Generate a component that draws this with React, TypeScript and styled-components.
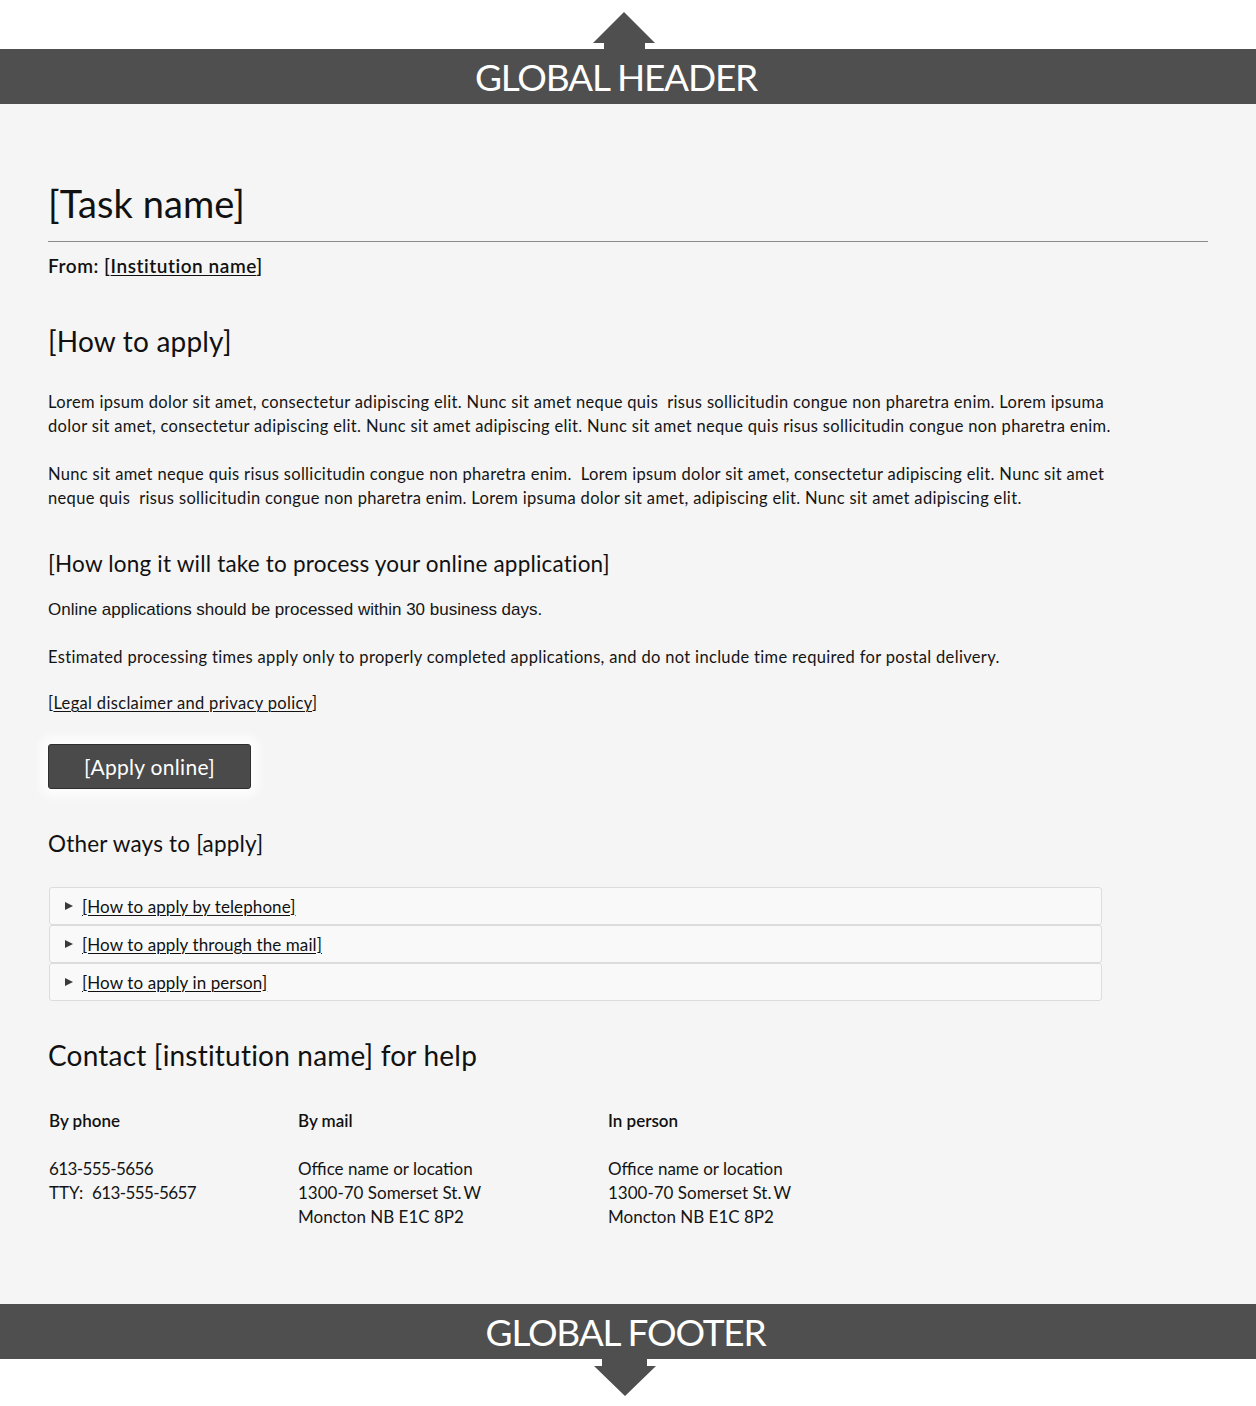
import React from "react";
import styled, { createGlobalStyle } from "styled-components";

const GlobalStyle = createGlobalStyle`
  html, body { margin: 0; padding: 0; background: #ffffff; }
  body { font-family: Lato, "Open Sans", sans-serif; color: #141414; }
  * { box-sizing: border-box; }
`;

const Page = styled.div`
  width: 1256px;
  display: flex;
  flex-direction: column;
`;

const Strip = styled.div<{ $align: "end" | "start"; $shift: number }>`
  height: ${(p) => (p.$align === "end" ? 49 : 47)}px;
  background: #ffffff;
  display: flex;
  justify-content: center;
  align-items: ${(p) => (p.$align === "end" ? "flex-end" : "flex-start")};
  padding-right: ${(p) => p.$shift}px;
`;

const Bar = styled.div<{ $shift: number }>`
  height: 55px;
  background: #4f4f4f;
  display: flex;
  align-items: center;
  justify-content: center;
  padding-right: ${(p) => p.$shift}px;
`;

const BarLabel = styled.span`
  font-family: Lato, "Open Sans", sans-serif;
  font-size: 37px;
  line-height: 1;
  color: #ffffff;
  letter-spacing: -1.2px;
`;

const Main = styled.main`
  height: 1200px;
  background: #f5f5f5;
  padding: 76px 48px 0 48px;
  display: flex;
  flex-direction: column;
  align-items: flex-start;
`;

const Title = styled.h1`
  margin: 0;
  font-weight: 400;
  font-size: 38px;
  line-height: 46px;
  color: #111;
  letter-spacing: 0.1px;
`;

const Rule = styled.hr`
  align-self: stretch;
  width: 1160px;
  margin: 15px 0 0 0;
  border: 0;
  border-top: 1px solid #8d8d8d;
`;

const FromLine = styled.p`
  margin: 12px 0 0 0;
  font-size: 19px;
  line-height: 24px;
  font-weight: 600;
  letter-spacing: 0.55px;
  color: #111;
`;

const Link = styled.a`
  color: inherit;
  font-weight: inherit;
  text-decoration: underline;
  text-underline-offset: 2px;
  text-decoration-thickness: 1px;
`;

const Heading = styled.h2<{ $size: number; $lh: number; $mt: number }>`
  margin: ${(p) => p.$mt}px 0 0 0;
  font-weight: 400;
  font-size: ${(p) => p.$size}px;
  line-height: ${(p) => p.$lh}px;
  letter-spacing: 0.2px;
  color: #111;
`;

const Para = styled.p<{ $mt: number; $arial?: boolean }>`
  margin: ${(p) => p.$mt}px 0 0 0;
  font-family: ${(p) =>
    p.$arial ? '"Liberation Sans", Arial, sans-serif' : 'Lato, "Open Sans", sans-serif'};
  font-size: ${(p) => (p.$arial ? 17 : 16.5)}px;
  letter-spacing: ${(p) => (p.$arial ? 0 : 0.33)}px;
  line-height: 24px;
  color: #141414;
  white-space: pre-wrap;
`;

const ButtonHalo = styled.div`
  margin-top: 29px;
  border-radius: 4px;
  box-shadow: 0 0 10px 8px rgba(255, 255, 255, 0.75);
`;

const ApplyButton = styled.button`
  width: 203px;
  height: 45px;
  display: flex;
  align-items: center;
  justify-content: center;
  background: #4a4a4a;
  border: 1px solid #2e2e2e;
  border-radius: 3px;
  color: #ffffff;
  font-family: Lato, "Open Sans", sans-serif;
  font-size: 21px;
  letter-spacing: 0.3px;
  padding: 0;
  cursor: pointer;
`;

const Accordion = styled.div`
  margin-top: 29px;
  width: 1053px;
  margin-left: 1px;
  display: flex;
  flex-direction: column;
`;

const AccordionRow = styled.div`
  height: 38px;
  display: flex;
  align-items: center;
  gap: 9px;
  padding-left: 15px;
  background: #f9f9f9;
  border: 1px solid #dcdcdc;
  border-radius: 3px;
  font-size: 17px;
  letter-spacing: 0.1px;
  color: #111;
`;

const Caret = styled.span`
  width: 0;
  height: 0;
  border-left: 8px solid #3a3a3a;
  border-top: 4.5px solid transparent;
  border-bottom: 4.5px solid transparent;
`;

const ContactGrid = styled.div`
  margin-top: 37px;
  display: grid;
  grid-template-columns: 249px 310px 300px;
  row-gap: 24px;
  margin-left: 1px;
`;

const ColHead = styled.div`
  font-size: 17px;
  line-height: 24px;
  font-weight: 600;
  color: #111;
`;

const ColBody = styled.div`
  font-size: 17px;
  line-height: 24px;
  color: #141414;
  white-space: pre-wrap;
`;

const Digits = styled.span`
  letter-spacing: -0.6px;
`;

const UpArrow = () => (
  <svg width="62" height="37" viewBox="0 0 62 37">
    <polygon points="31,0 62,31 52,31 52,37 11,37 11,31 0,31" fill="#4f4f4f" />
  </svg>
);

const DownArrow = () => (
  <svg width="62" height="37" viewBox="0 0 62 37">
    <polygon points="8,0 53,0 53,7 62,7 31,37 0,7 8,7" fill="#4f4f4f" />
  </svg>
);

const para1 =
  "Lorem ipsum dolor sit amet, consectetur adipiscing elit. Nunc sit amet neque quis  risus sollicitudin congue non pharetra enim. Lorem ipsuma\ndolor sit amet, consectetur adipiscing elit. Nunc sit amet adipiscing elit. Nunc sit amet neque quis risus sollicitudin congue non pharetra enim.";
const para2 =
  "Nunc sit amet neque quis risus sollicitudin congue non pharetra enim.  Lorem ipsum dolor sit amet, consectetur adipiscing elit. Nunc sit amet\nneque quis  risus sollicitudin congue non pharetra enim. Lorem ipsuma dolor sit amet, adipiscing elit. Nunc sit amet adipiscing elit.";

const ways = [
  "[How to apply by telephone]",
  "[How to apply through the mail]",
  "[How to apply in person]",
];

const address = "Office name or location\n1300-70 Somerset St.\u2009W\nMoncton NB E1C 8P2";

export default function App() {
  return (
    <>
      <GlobalStyle />
      <Page>
        <Strip $align="end" $shift={8}>
          <UpArrow />
        </Strip>
        <Bar $shift={24}>
          <BarLabel>GLOBAL HEADER</BarLabel>
        </Bar>
        <Main>
          <Title>[Task name]</Title>
          <Rule />
          <FromLine>
            From: [<Link href="#">Institution name</Link>]
          </FromLine>
          <Heading $size={28} $lh={34} $mt={46}>
            [How to apply]
          </Heading>
          <Para $mt={32}>{para1}</Para>
          <Para $mt={24}>{para2}</Para>
          <Heading $size={22.5} $lh={28} $mt={40}>
            [How long it will take to process your online application]
          </Heading>
          <Para $mt={20} $arial>
            Online applications should be processed within 30 business days.
          </Para>
          <Para $mt={23}>
            Estimated processing times apply only to properly completed applications, and do
            not include time required for postal delivery.
          </Para>
          <Para $mt={22}>
            [<Link href="#">Legal disclaimer and privacy policy</Link>]
          </Para>
          <ButtonHalo>
            <ApplyButton>[Apply online]</ApplyButton>
          </ButtonHalo>
          <Heading $size={22.5} $lh={28} $mt={41}>
            Other ways to [apply]
          </Heading>
          <Accordion>
            {ways.map((w) => (
              <AccordionRow key={w}>
                <Caret />
                <Link href="#">{w}</Link>
              </AccordionRow>
            ))}
          </Accordion>
          <Heading $size={28} $lh={34} $mt={37}>
            Contact [institution name] for help
          </Heading>
          <ContactGrid>
            <ColHead>By phone</ColHead>
            <ColHead>By mail</ColHead>
            <ColHead>In person</ColHead>
            <ColBody>
              <Digits>613-555-5656</Digits>
              {"\nTTY:  "}
              <Digits>613-555-5657</Digits>
            </ColBody>
            <ColBody>{address}</ColBody>
            <ColBody>{address}</ColBody>
          </ContactGrid>
        </Main>
        <Bar $shift={5}>
          <BarLabel>GLOBAL FOOTER</BarLabel>
        </Bar>
        <Strip $align="start" $shift={6}>
          <DownArrow />
        </Strip>
      </Page>
    </>
  );
}
